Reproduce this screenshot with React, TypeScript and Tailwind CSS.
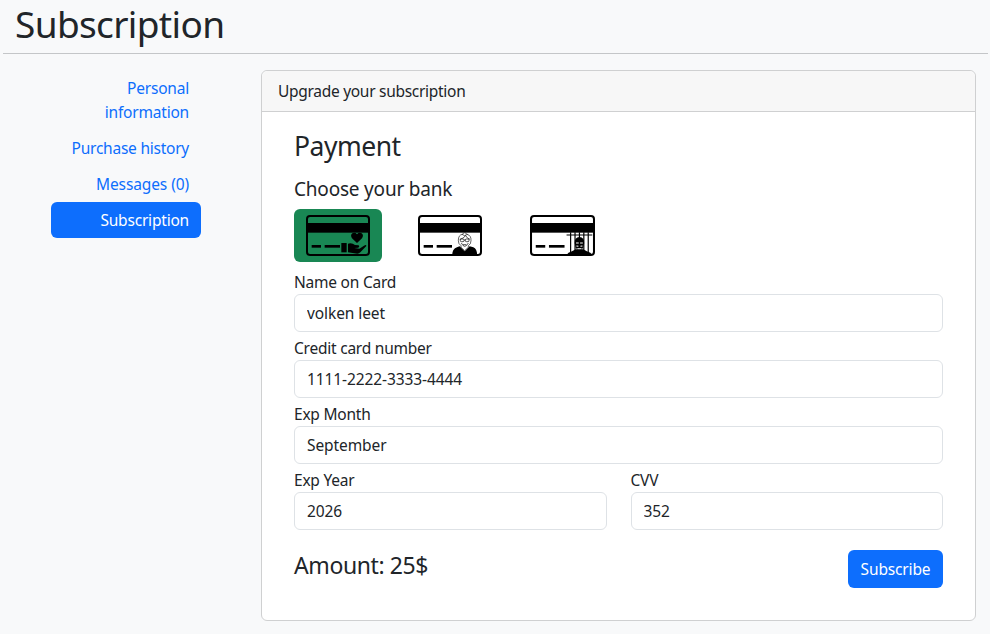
import React from "react";

function CardFrame({ children, wide = false }: { children: React.ReactNode; wide?: boolean }) {
  return (
    <svg
      viewBox="0 0 192 123"
      preserveAspectRatio="none"
      className={wide ? "h-[41px] w-[65px] text-black" : "h-[41px] w-16 text-black"}
      fill="currentColor"
    >
      <rect x="3" y="3" width="186" height="117" rx="9" fill="none" stroke="currentColor" strokeWidth="6" />
      <rect x="3" y="24" width="186" height="29" />
      <rect x="17" y="90" width="28" height="8" />
      <rect x="56" y="90" width="46" height="8" />
      {children}
    </svg>
  );
}

function CharityCard() {
  return (
    <CardFrame>
      <rect x="106" y="84" width="16" height="28" />
      <path d="M153 84 L138 70 Q132 60 139 55 Q147 51 153 58 Q159 51 167 55 Q174 60 168 70 Z" />
      <path d="M126 86 Q138 83 147 90 L158 91 Q162 95 157 98 L145 99 L160 101 L174 92 Q181 88 181 93 L163 112 Q159 116 154 116 L126 112 Z" />
    </CardFrame>
  );
}

function ElderCard() {
  return (
    <CardFrame>
      <path d="M102 122 Q103 101 117 97 L125 94 L140 109 L155 94 L166 97 Q177 101 178 122 Z" />
      <path d="M121 76 Q121 60 133 58 Q140 48 147 58 Q160 61 159 77 Q159 88 151 92 L151 97 L140 107 L129 97 L129 92 Q120 86 121 76 Z" fill="white" stroke="currentColor" strokeWidth="1.8" />
      <path d="M125 73 Q136 71 143 62 Q148 71 156 73 M130 84 Q140 104 151 84 M135 89 H145 M132 58 Q140 66 148 58 M138 75 H142" fill="none" stroke="currentColor" strokeWidth="2" />
      <rect x="127" y="72" width="11" height="8" rx="3" fill="none" stroke="currentColor" strokeWidth="2" />
      <rect x="142" y="72" width="11" height="8" rx="3" fill="none" stroke="currentColor" strokeWidth="2" />
    </CardFrame>
  );
}

function PrisonerCard() {
  return (
    <CardFrame wide>
      <path d="M107 121 Q112 112 124 109 L135 103 H157 L168 109 Q180 112 185 121 Z" />
      <path d="M132 84 Q131 68 146 66 Q161 68 160 84 L157 99 L146 107 L135 99 Z" />
      <path d="M136 84 H144 M148 84 H156 M137 93 L143 94 M149 94 L155 93 M140 100 Q146 103 152 100" stroke="white" strokeWidth="3" fill="none" />
      <path d="M108 60 H184 M120 52 V120 M133 52 V120 M146 52 V72 M159 52 V120 M172 52 V120" fill="none" stroke="currentColor" strokeWidth="3.5" />
    </CardFrame>
  );
}

function Field({ label, value, name }: { label: string; value: string; name: string }) {
  return (
    <label className="block min-w-0 flex-1 text-[15.5px] leading-6">
      <span className="block tracking-[-0.23px]">{label}</span>
      <input
        name={name}
        defaultValue={value}
        className="block h-[38px] w-full rounded-md border border-[#dee2e6] bg-white px-3 py-1.5 tracking-[-0.09px] outline-none"
      />
    </label>
  );
}

export default function App() {
  return (
    <div className="h-[634px] overflow-hidden bg-[#f8f9fa] px-[3px] font-['Noto_Sans',sans-serif] text-[#212529]">
      <h1 className="h-[53px] pl-3 text-[37px] leading-[47px] tracking-[-0.65px]">Subscription</h1>
      <hr className="mr-[-1px] border-[#c4c6c8]" />
      <div className="flex pt-4">
        <nav className="ml-12 w-[150px] shrink-0 text-right text-[15.5px] leading-6 tracking-[-0.2px] text-[#0d6efd]">
          <a className="block px-3 py-1.5">Personal information</a>
          <a className="block px-3 py-1.5 tracking-[-0.24px]">Purchase history</a>
          <a className="block px-3 py-1.5 tracking-[-0.1px]">Messages (0)</a>
          <a className="block rounded-md bg-[#0d6efd] px-3 py-1.5 text-white">Subscription</a>
        </nav>
        <section className="ml-[60px] h-[551px] w-[715px] rounded-md border border-[#cfd0d1] bg-white">
          <header className="h-[41px] rounded-t-md border-b border-[#cfd0d1] bg-[#f7f7f7] px-4 py-2 text-[15.5px] leading-6 tracking-[-0.29px]">
            Upgrade your subscription
          </header>
          <div className="px-8 pt-[17px]">
            <h2 className="h-[42px] text-[26.5px] leading-[35px] tracking-[-0.5px]">Payment</h2>
            <h3 className="h-[38px] pt-[6px] text-[19px] leading-6 tracking-[-0.2px]">Choose your bank</h3>
            <div className="flex gap-6">
              <button className="h-[53px] w-[88px] rounded-md bg-[#198754] px-3 py-1.5"><CharityCard /></button>
              <button className="h-[53px] w-[88px] rounded-md px-3 py-1.5"><ElderCard /></button>
              <button className="h-[53px] w-[89px] rounded-md px-3 py-1.5"><PrisonerCard /></button>
            </div>
            <form className="flex flex-col gap-1 pt-2">
              <Field label="Name on Card" name="owner" value="volken leet" />
              <Field label="Credit card number" name="number" value="1111-2222-3333-4444" />
              <Field label="Exp Month" name="month" value="September" />
              <div className="flex gap-6">
                <Field label="Exp Year" name="year" value="2026" />
                <Field label="CVV" name="cvv" value="352" />
              </div>
              <div className="flex items-start justify-between pt-4">
                <span className="text-[23px] leading-[31px] tracking-[-0.4px]">Amount: 25$</span>
                <button type="button" className="h-[38px] w-[95px] rounded-md bg-[#0d6efd] text-[15.5px] leading-6 tracking-[-0.15px] text-white">Subscribe</button>
              </div>
            </form>
          </div>
        </section>
      </div>
    </div>
  );
}
